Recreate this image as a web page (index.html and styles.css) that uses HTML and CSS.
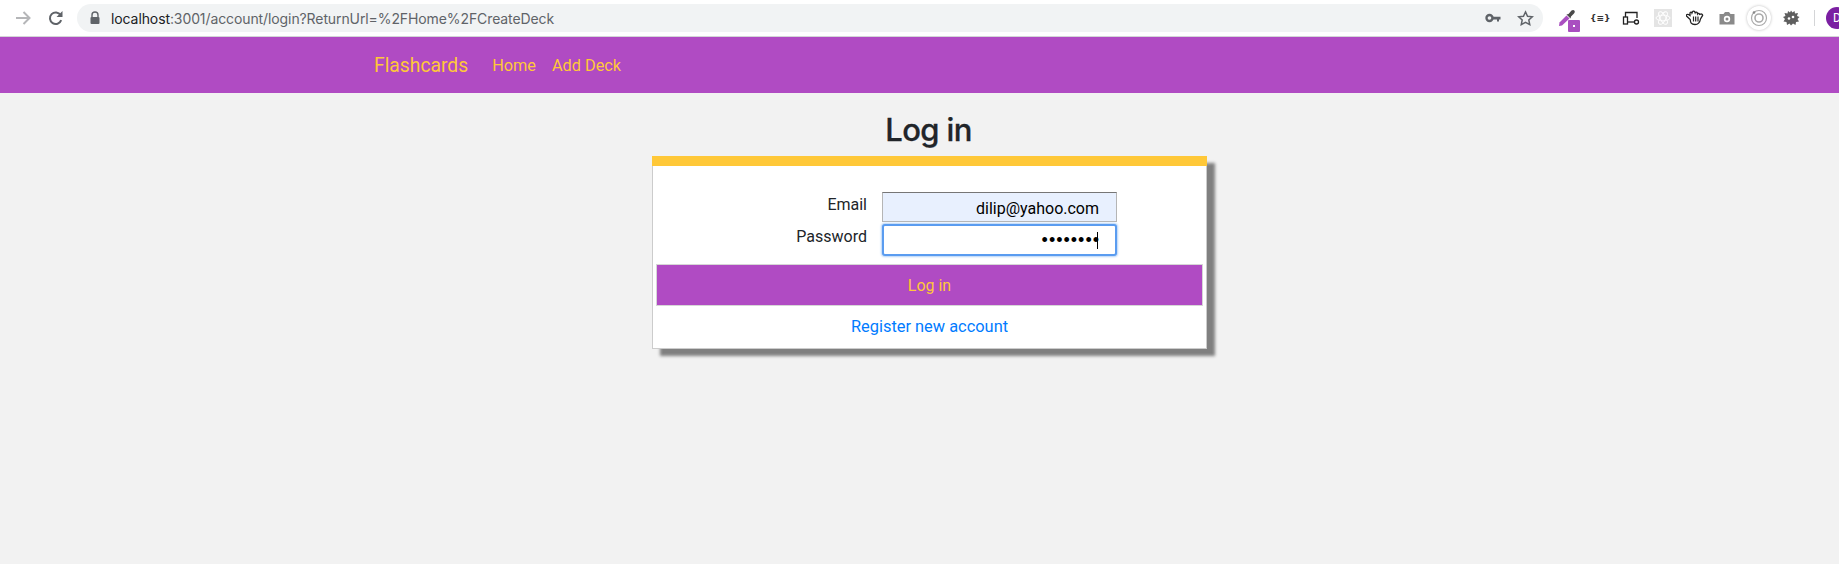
FILE: index.html
```html
<!DOCTYPE html>
<html>
    <head>
        <title>Log in</title>
        <link rel="stylesheet" href="styles.css">
    </head>
    <body>
        <div class="toolbar">
            <svg class="tool-icon back" viewBox="0 0 20 20"><path d="M3 10h13M10.5 4l6 6-6 6" fill="none" stroke="#b5b6b8" stroke-width="2"/></svg>
            <svg class="tool-icon reload" viewBox="0 0 20 20"><path d="M15.2 12.2a5.800 5.800 0 1 1-.6-5.200" fill="none" stroke="#5f6368" stroke-width="2"/><path d="M16.500 3v6h-6z" fill="#5f6368"/></svg>
            <div class="omnibox">
                <svg class="lock" viewBox="0 0 12 14"><path d="M3 6V4a3 3 0 0 1 6 0v2" fill="none" stroke="#5f6368" stroke-width="1.400"/><rect x="1.500" y="6" width="9" height="7" rx="1" fill="#5f6368"/></svg>
                <div class="url"><span class="host">localhost</span>:3001/account/login?ReturnUrl=%2FHome%2FCreateDeck</div>
                <svg class="key" viewBox="0 0 16 10"><circle cx="4.500" cy="5" r="3" fill="none" stroke="#5f6368" stroke-width="2.400"/><path d="M8 3.800h7.500v2.600H14v2h-2v-2H8z" fill="#5f6368"/></svg>
                <svg class="star" viewBox="0 0 16 16"><path d="M8 1.800l1.900 4.100 4.500.5-3.300 3 .9 4.400L8 11.600l-4 2.200.9-4.400-3.300-3 4.500-.5z" fill="none" stroke="#5f6368" stroke-width="1.400"/></svg>
            </div>
            <div class="extensions">
                <div class="ext ext-dropper">
                    <svg viewBox="0 0 18 18"><path d="M1 17l.5-3.500L8.500 6.500l3 3L4 16.500z" fill="#a94fc0"/><path d="M8.500 5.500l2-.5 3-3.500c1-.8 2.500-.8 3 .3.600 1 .2 2-.5 2.700l-3 3-.5 2z" fill="#4a4a4a"/></svg>
                    <span class="ext-badge"><span class="ext-badge-dot"></span></span>
                </div>
                <div class="ext ext-json">{≡}</div>
                <svg class="ext" viewBox="0 0 18 18"><path d="M3.500 8V3.500h11.500V9" fill="none" stroke="#222" stroke-width="1.300"/><rect x="1.500" y="8" width="4" height="7" fill="none" stroke="#222" stroke-width="1.300"/><path d="M5.500 13h7" stroke="#222" stroke-width="1.300"/><circle cx="14.500" cy="13" r="2" fill="none" stroke="#222" stroke-width="1.300"/></svg>
                <svg class="ext ext-react" viewBox="0 0 18 18"><rect width="18" height="18" fill="#e4e4e4"/><g fill="none" stroke="#fff" stroke-width=".9"><ellipse cx="9" cy="9" rx="7" ry="2.800"/><ellipse cx="9" cy="9" rx="7" ry="2.800" transform="rotate(60 9 9)"/><ellipse cx="9" cy="9" rx="7" ry="2.800" transform="rotate(120 9 9)"/></g></svg>
                <svg class="ext ext-hand" viewBox="0 0 18 18"><path d="M.5 7c-.5-1.500 1-2 2-1.500l1.500 1L4 4c0-1.200 1.700-1.200 2 0l.5-1.200c.4-1 1.800-1 2.200 0l.4 1c.4-1 1.800-1 2.200 0l.2 1.200c.6-1 2-.7 2 .5l1-.3c1-.5 2.500.3 2 1.500l-2 3.300c-.5 2.700-1.500 5.500-5.500 5.500S4.500 13.500 4.200 10.500z" fill="#fff" stroke="#222" stroke-width="1.300"/><path d="M7.500 7.500v5M9.700 7.500v5M12 7.500v5" stroke="#222" stroke-width="1.200"/></svg>
                <svg class="ext" viewBox="0 0 18 18"><path d="M1.500 5h4l1.500-2h4l1.500 2h4v10.500h-15z" fill="#8a8a8a"/><circle cx="9" cy="10" r="3.200" fill="#fff"/><circle cx="9" cy="10" r="1.500" fill="#8a8a8a"/></svg>
                <div class="ext-round">
                    <svg viewBox="0 0 20 20"><g fill="none" stroke="#aaa"><circle cx="10" cy="10" r="7.500" stroke-width="1.200"/><circle cx="10" cy="10" r="4" stroke-width="1.600"/></g><circle cx="5" cy="4.500" r="1.300" fill="#888"/></svg>
                </div>
                <svg class="ext" viewBox="0 0 18 18"><path d="M9 1.500l1.500 2 2-1.500.5 2.500 3-.5-1 3 2.500 1-2 2 1.500 2.500-3 .5-.5 3-2.500-1.500L9 16.500 7.500 14.500 5 16l-.5-3-3-.5L3 10 1 8l2.500-1-1-3 3 .5L6 2l2 1.500z" fill="#5f5f5f"/><circle cx="7" cy="9.500" r="1.300" fill="#fff"/><circle cx="11" cy="8" r="1.300" fill="#fff"/></svg>
                <div class="divider"></div>
                <div class="avatar">D</div>
            </div>
        </div>

        <div class="navbar">
            <a class="brand" href="#">Flashcards</a>
            <a class="nav-link" href="#">Home</a>
            <a class="nav-link" href="#">Add Deck</a>
        </div>

        <div class="content">
            <h1 class="title">Log in</h1>
            <div class="card">
                <div class="card-top"></div>
                <div class="form-rows">
                    <div class="form-row">
                        <label for="email">Email</label>
                        <input id="email" class="field field-filled" type="text" value="dilip@yahoo.com">
                    </div>
                    <div class="form-row">
                        <label for="password">Password</label>
                        <div class="field field-focus">
                            <span class="dots">••••••••</span><span class="caret"></span>
                        </div>
                    </div>
                </div>
                <button class="submit">Log in</button>
                <div class="register"><a href="#">Register new account</a></div>
            </div>
        </div>
    </body>
</html>
```

FILE: styles.css
```css
html, body {
    margin: 0;
    padding: 0;
}

body {
    height: 564px;
    overflow: hidden;
    background-color: #f2f2f2;
    font-family: "Roboto", "Liberation Sans", sans-serif;
    color: #212529;
}

.toolbar {
    display: flex;
    align-items: center;
    height: 36px;
    background-color: #ffffff;
    border-bottom: 1px solid #d4d5d7;
}

.tool-icon {
    width: 20px;
    height: 20px;
    flex: none;
}

.back {
    margin-left: 13px;
}

.reload {
    margin-left: 13px;
}

.omnibox {
    display: flex;
    align-items: center;
    flex: none;
    width: 1466px;
    height: 28px;
    margin-left: 11px;
    padding: 0 9px 0 12px;
    box-sizing: border-box;
    background-color: #f1f3f4;
    border-radius: 14px;
}

.lock {
    width: 12px;
    height: 14px;
    flex: none;
}

.url {
    flex: 1;
    margin-left: 10px;
    font-family: "Inter", "Liberation Sans", sans-serif;
    font-size: 14px;
    letter-spacing: -0.1px;
    color: #5f6368;
}

.host {
    color: #202124;
}

.key {
    width: 16px;
    height: 10px;
    margin-right: 16px;
}

.star {
    width: 17px;
    height: 17px;
}

.extensions {
    display: flex;
    align-items: center;
    flex: none;
    gap: 14px;
    margin-left: 15px;
}

.ext {
    display: block;
    width: 18px;
    height: 18px;
    flex: none;
}

.ext-dropper {
    position: relative;
}

.ext-badge {
    position: absolute;
    left: 10px;
    top: 11px;
    display: flex;
    align-items: center;
    justify-content: center;
    width: 12px;
    height: 12px;
    border-radius: 1px;
    background-color: #a94fc0;
}

.ext-badge-dot {
    width: 2px;
    height: 2px;
    background-color: #ffffff;
}

.ext-json {
    font-family: "DejaVu Sans", sans-serif;
    font-size: 9px;
    font-weight: bold;
    line-height: 18px;
    text-align: center;
    color: #333333;
}

.ext-round {
    display: flex;
    align-items: center;
    justify-content: center;
    flex: none;
    width: 24px;
    height: 24px;
    margin: 0 -3px;
    border-radius: 50%;
    background-color: #ffffff;
    box-shadow: 0 0 3px #bbbbbb;
}

.ext-round svg {
    width: 20px;
    height: 20px;
}

.divider {
    flex: none;
    width: 1px;
    height: 16px;
    background-color: #d4d5d7;
}

.avatar {
    flex: none;
    width: 22px;
    height: 22px;
    margin-left: -3px;
    border-radius: 50%;
    background-color: #7b1fa2;
    color: #ffffff;
    font-size: 12px;
    line-height: 22px;
    text-align: center;
}

.navbar {
    display: flex;
    align-items: center;
    height: 56px;
    padding-left: 374px;
    background-color: #b04bc3;
}

.navbar a {
    color: #ffc838;
    text-decoration: none;
}

.brand {
    font-size: 19.3px;
    margin-right: 24px;
}

.nav-link {
    font-size: 16.3px;
    margin-right: 16px;
}

.content {
    display: flex;
    flex-direction: column;
    align-items: center;
    padding-left: 20px;
}

.title {
    margin: 18px 0 7px;
    font-family: "Inter", "Liberation Sans", sans-serif;
    font-size: 31px;
    font-weight: 500;
    letter-spacing: -0.6px;
    line-height: 38px;
    -webkit-text-stroke: 0.3px #212529;
    transform: translateX(-1px);
}

.card {
    width: 555px;
    box-sizing: border-box;
    background-color: #ffffff;
    border: 1px solid #cccccc;
    border-top: 0;
    box-shadow: 8px 7px 3px #808080;
}

.card-top {
    height: 10px;
    margin: 0 -1px;
    background-color: #ffc838;
}

.form-rows {
    padding: 26px 0 8px;
}

.form-row {
    display: flex;
    align-items: flex-start;
    margin-bottom: 2px;
}

.form-row:last-child {
    margin-bottom: 0;
}

.form-row label {
    width: 214px;
    margin-right: 15px;
    padding-top: 1px;
    font-size: 16px;
    line-height: 24px;
    text-align: right;
    color: #212529;
}

.field {
    width: 235px;
    height: 30px;
    box-sizing: border-box;
    margin: 0;
    font-family: "Roboto", "Liberation Sans", sans-serif;
    font-size: 16px;
    text-align: right;
    color: #000000;
}

.field-filled {
    padding: 2px 17px 0 0;
    background-color: #e8f0fe;
    border: 1px solid #b5b5b5;
    border-top-color: #767676;
    outline: none;
}

.field-focus {
    display: flex;
    align-items: center;
    justify-content: flex-end;
    height: 32px;
    padding-right: 17px;
    background-color: #ffffff;
    border: 2px solid #5a9cf0;
    border-radius: 3px;
    box-shadow: 0 0 2px 1px #b5d3f7;
}

.dots {
    margin-right: -3px;
    font-family: "Liberation Sans", sans-serif;
    font-size: 18px;
    letter-spacing: 1px;
}

.caret {
    width: 1px;
    height: 17px;
    background-color: #000000;
}

.submit {
    display: block;
    width: 547px;
    height: 42px;
    margin: 0 0 0 3px;
    padding: 0;
    background-color: #b04bc3;
    border: 1px solid #d6d6d6;
    color: #ffc838;
    font-family: "Roboto", "Liberation Sans", sans-serif;
    font-size: 16px;
}

.register {
    height: 42px;
    font-size: 16.4px;
    line-height: 42px;
    text-align: center;
}

.register a {
    color: #007bff;
    text-decoration: none;
}
```
